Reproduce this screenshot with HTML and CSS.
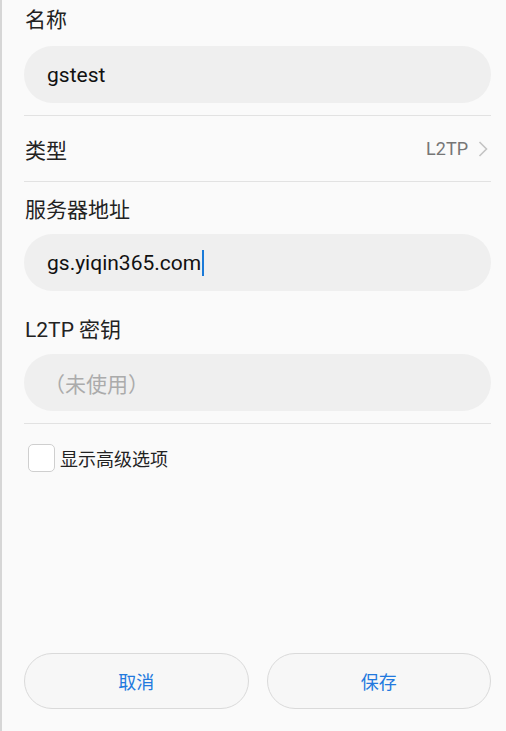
FILE: index.html
```html
<!DOCTYPE html>
<html lang="zh">
<head>
<meta charset="utf-8">
<link rel="stylesheet" href="styles.css">
</head>
<body>
<div class="page">
  <div class="label first">名称</div>
  <div class="field"><span class="value">gstest</span></div>
  <div class="divider"></div>
  <div class="row">
    <span class="row-title">类型</span>
    <span class="row-value">L2TP
      <svg class="chev" width="10" height="16" viewBox="0 0 10 16"><path d="M1.5 1 L8.5 8 L1.5 15" fill="none" stroke="#c4c4c4" stroke-width="1.6"/></svg>
    </span>
  </div>
  <div class="divider flush"></div>
  <div class="label second">服务器地址</div>
  <div class="field"><span class="value">gs.yiqin365.com</span><span class="caret"></span></div>
  <div class="label third">L2TP 密钥</div>
  <div class="field"><span class="placeholder">（未使用）</span></div>
  <div class="divider"></div>
  <label class="check">
    <span class="box"></span>
    <span class="check-text">显示高级选项</span>
  </label>
  <div class="buttons">
    <div class="btn">取消</div>
    <div class="btn">保存</div>
  </div>
</div>
</body>
</html>
```
FILE: styles.css
```css
html, body {
  margin: 0;
  padding: 0;
  height: 100%;
}
body {
  background: #fafafa;
  font-family: Roboto, "Noto Sans CJK SC", sans-serif;
  color: #212121;
  border-left: 2px solid #d6d6d6;
  box-sizing: border-box;
}
.page {
  height: 100%;
  box-sizing: border-box;
  padding: 0 15px 22px 22px;
  display: flex;
  flex-direction: column;
}
.label {
  font-size: 21px;
  line-height: 24px;
  height: 24px;
  color: #222;
  padding-left: 1px;
}
.label.first { margin-top: 8px; margin-bottom: 14px; }
.label.second { margin-top: 16px; margin-bottom: 12px; }
.label.third { margin-top: 27px; margin-bottom: 12px; }
.field {
  height: 57px;
  border-radius: 29px;
  background: #efefef;
  display: flex;
  align-items: center;
  padding-left: 23px;
  box-sizing: border-box;
  font-size: 21px;
  color: #111;
}
.placeholder {
  color: #ababab;
  margin-left: -3px;
}
.caret {
  display: inline-block;
  width: 2px;
  height: 26px;
  background: #1a7ad8;
  margin-left: 1px;
}
.divider {
  height: 1px;
  background: #e2e2e2;
  margin-top: 12px;
}
.divider.flush {
  margin-top: 0;
}
.row {
  height: 65px;
  display: flex;
  align-items: center;
  justify-content: space-between;
  padding-top: 0;
  box-sizing: border-box;
}
.row-title {
  font-size: 21px;
  color: #222;
  padding-left: 1px;
}
.row-value {
  font-size: 18px;
  color: #767676;
  display: flex;
  align-items: center;
  gap: 10px;
  padding-right: 3px;
}
.check {
  display: flex;
  align-items: center;
  margin-top: 20px;
  margin-left: 4px;
  height: 27px;
}
.box {
  width: 25px;
  height: 26px;
  border: 1px solid #cfcfcf;
  border-radius: 5px;
  background: #fff;
}
.check-text {
  font-size: 18px;
  color: #222;
  margin-left: 5px;
}
.buttons {
  margin-top: auto;
  display: flex;
  gap: 18px;
}
.btn {
  flex: 1;
  height: 56px;
  box-sizing: border-box;
  border: 1px solid #dadada;
  border-radius: 28px;
  background: #f7f7f7;
  display: flex;
  align-items: center;
  justify-content: center;
  font-size: 18px;
  color: #2279de;
}
```
